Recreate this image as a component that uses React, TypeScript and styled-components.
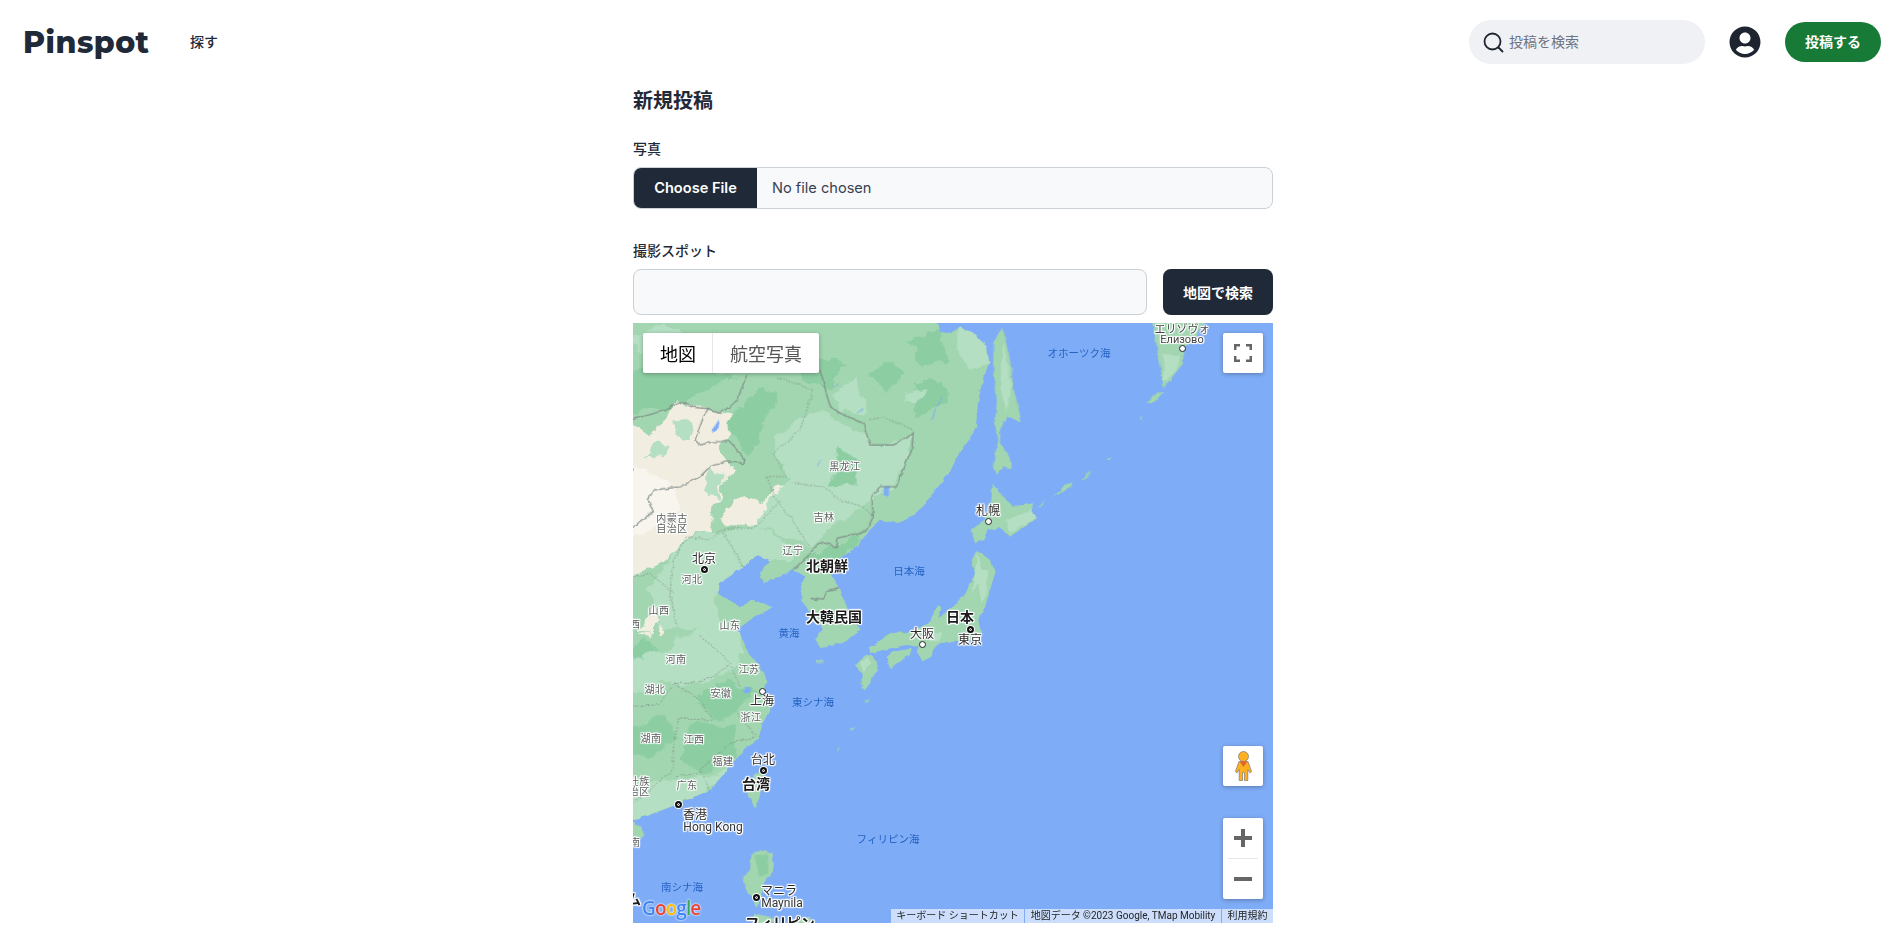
import styled, { createGlobalStyle } from "styled-components";
import { FaUserCircle } from "react-icons/fa";

const UI_FONT = `Inter, "Noto Sans CJK JP", sans-serif`;
const MAP_FONT = `Roboto, "Noto Sans CJK JP", sans-serif`;

const GlobalStyle = createGlobalStyle`
  * { box-sizing: border-box; }
  body {
    margin: 0;
    background: #fff;
    color: #1f2937;
    font-family: ${UI_FONT};
  }
`;

const Header = styled.header`
  height: 84px;
  padding: 0 22px 0 23px;
  display: flex;
  align-items: center;
`;

const Logo = styled.div`
  width: 167px;
  font-family: Montserrat, Inter, sans-serif;
  font-size: 30px;
  font-weight: 800;
  letter-spacing: 0.5px;
  color: #1f2937;
`;

const NavLink = styled.a`
  margin-bottom: 2px;
  font-size: 14px;
  font-weight: 500;
  color: #1f2937;
`;

const HeaderRight = styled.div`
  margin-left: auto;
  display: flex;
  align-items: center;
`;

const SearchBox = styled.div`
  width: 236px;
  height: 44px;
  padding-left: 14px;
  border-radius: 22px;
  background: #f0f1f5;
  display: flex;
  align-items: center;
  gap: 5px;
  font-size: 14px;
  color: #6b7280;
`;

const SearchText = styled.span`
  margin-bottom: 2px;
`;

const Avatar = styled.div`
  margin: 0 24px;
  display: flex;
  color: #1e2530;
`;

const PostButton = styled.button`
  width: 96px;
  height: 40px;
  padding: 0 0 2px;
  border: 0;
  border-radius: 20px;
  background: #177a37;
  color: #fff;
  font-family: inherit;
  font-size: 14px;
  font-weight: 700;
`;

const Main = styled.main`
  width: 640px;
  margin-left: 633px;
  padding: 3px 0 15px;
  display: flex;
  flex-direction: column;
`;

const Title = styled.h1`
  margin: 0 0 24px;
  font-size: 20px;
  line-height: 28px;
  font-weight: 700;
`;

const Label = styled.label`
  display: block;
  margin-bottom: 8px;
  font-size: 14px;
  line-height: 20px;
  font-weight: 500;
`;

const FileField = styled.div`
  height: 42px;
  margin-bottom: 32px;
  border: 1px solid #cbcfd6;
  border-radius: 8px;
  background: #f8f9fb;
  overflow: hidden;
  display: flex;
  align-items: center;
  font-size: 14.6px;
`;

const FileButton = styled.button`
  width: 123px;
  height: 100%;
  padding: 0;
  border: 0;
  background: #1f2937;
  color: #fff;
  font-family: inherit;
  font-size: 14.6px;
  font-weight: 600;
`;

const FileName = styled.span`
  margin-left: 15px;
  color: #374151;
`;

const SpotRow = styled.div`
  height: 46px;
  margin-bottom: 8px;
  display: flex;
  gap: 16px;
`;

const SpotInput = styled.input`
  flex: 1;
  min-width: 0;
  border: 1px solid #cbcfd6;
  border-radius: 8px;
  background: #f8f9fb;
`;

const MapSearchButton = styled.button`
  width: 110px;
  border: 0;
  border-radius: 8px;
  background: #1f2937;
  color: #fff;
  font-family: inherit;
  font-size: 14px;
  font-weight: 700;
`;

const MapFrame = styled.div`
  position: relative;
  height: 600px;
  overflow: hidden;
  background: #7facf6;
  font-family: ${MAP_FONT};
`;

const MapArt = styled.svg`
  display: block;
`;

const labelKinds = {
  province: `font-size: 10px; line-height: 10px; letter-spacing: .5px; color: #5a5f5c;`,
  city: `font-size: 12px; line-height: 12px; color: #2b2b2b;`,
  cityLatin: `font-size: 12px; line-height: 12px; color: #333;`,
  town: `font-size: 11px; line-height: 10px; color: #444;`,
  country: `font-size: 14px; line-height: 14px; font-weight: 700; color: #1b1b1b;`,
  sea: `font-size: 10.5px; line-height: 11px; color: #2563c4;`,
};

type LabelKind = keyof typeof labelKinds;

const MapLabel = styled.span<{ $x: number; $y: number; $kind: LabelKind }>`
  position: absolute;
  left: ${(p) => p.$x}px;
  top: ${(p) => p.$y}px;
  transform: translate(-50%, -50%);
  white-space: pre;
  text-align: center;
  ${(p) => labelKinds[p.$kind]}
  ${(p) =>
    p.$kind !== "sea" &&
    `text-shadow: 1px 0 1px #fff, -1px 0 1px #fff, 0 1px 1px #fff, 0 -1px 1px #fff, 1px 1px 1px #fff, -1px -1px 1px #fff, 1px -1px 1px #fff, -1px 1px 1px #fff;`}
`;

const CityDot = styled.span<{ $x: number; $y: number; $capital?: boolean }>`
  position: absolute;
  left: ${(p) => p.$x - 3.5}px;
  top: ${(p) => p.$y - 3.5}px;
  width: 7px;
  height: 7px;
  border-radius: 50%;
  background: ${(p) => (p.$capital ? "#111" : "#fff")};
  border: ${(p) => (p.$capital ? "2px solid #111" : "1.5px solid #222")};
  box-shadow: ${(p) => (p.$capital ? "inset 0 0 0 1px #fff, 0 0 0 1px #fff" : "none")};
`;

const MapTypeControl = styled.div`
  position: absolute;
  left: 10px;
  top: 10px;
  height: 40px;
  display: flex;
  border-radius: 2px;
  background: #fff;
  box-shadow: 0 1px 4px rgba(0, 0, 0, 0.3);
`;

const MapTypeTab = styled.div<{ $active?: boolean }>`
  padding: 0 17px;
  display: flex;
  align-items: center;
  font-size: 18px;
  color: ${(p) => (p.$active ? "#000" : "#565656")};
  & + & {
    box-shadow: -1px 0 0 #e6e6e6;
  }
`;

const ControlButton = styled.div<{ $top?: number; $bottom?: number }>`
  position: absolute;
  right: 10px;
  width: 40px;
  ${(p) => (p.$top !== undefined ? `top: ${p.$top}px; height: 40px;` : "")}
  ${(p) => (p.$bottom !== undefined ? `bottom: ${p.$bottom}px; height: 40px;` : "")}
  border-radius: 2px;
  background: #fff;
  box-shadow: 0 1px 4px rgba(0, 0, 0, 0.3);
  display: flex;
  align-items: center;
  justify-content: center;
`;

const ZoomControl = styled.div`
  position: absolute;
  right: 10px;
  bottom: 24px;
  width: 40px;
  height: 81px;
  border-radius: 2px;
  background: #fff;
  box-shadow: 0 1px 4px rgba(0, 0, 0, 0.3);
  display: flex;
  flex-direction: column;
  align-items: center;
  justify-content: space-between;
  padding: 11px 0;
`;

const ZoomDivider = styled.div`
  width: 30px;
  height: 1px;
  background: #e6e6e6;
`;

const GoogleMark = styled.div`
  position: absolute;
  left: 9px;
  bottom: 3px;
  font-family: "Open Sans", Roboto, sans-serif;
  font-size: 19px;
  line-height: 24px;
  font-weight: 600;
  letter-spacing: -0.9px;
  text-shadow: 0 0 2px #fff, 0 0 2px rgba(255, 255, 255, 0.7);
`;

const GoogleLetter = styled.span<{ $color: string }>`
  color: ${(p) => p.$color};
`;

const Attribution = styled.div`
  position: absolute;
  right: 0;
  bottom: 0;
  height: 14px;
  display: flex;
  gap: 1px;
  font-size: 10px;
  line-height: 14px;
  color: #1f1f1f;
`;

const AttributionItem = styled.span<{ $width: number }>`
  width: ${(p) => p.$width}px;
  background: rgba(255, 255, 255, 0.6);
  text-align: center;
  white-space: nowrap;
  overflow: hidden;
`;

const WATER = "#7facf6";
const LAND = "#a1d6b0";
const LIGHT = "#b4dfc2";
const DARK = "#8ccda2";
const CREAM = "#f2ede1";
const PALE = "#f8f5ee";
const LINE = "#7d8a85";

const MAINLAND =
  "M-10 -10L304 -10L304 0L307 9L318 11L325 4L340 10L354 24L356 40L349 60L345 80L343 104L334 120L324 134L317 149L297 174L284 190L264 200L247 197L234 210L224 224L204 237L197 250L207 267L214 284L227 307L210 320L187 324L182 317L189 307L184 297L170 280L167 264L172 254L160 247L130 260L127 250L137 237L124 232L110 244L87 260L85 270L107 284L120 277L140 284L117 297L104 307L107 310L114 327L127 344L134 360L130 370L140 380L130 400L125 417L110 427L100 440L77 467L47 480L17 492L-10 499Z";

// the shapes below are traced in 3x crop coordinates, hence the scaled groups
const NORTH_SHAPES: [string, string][] = [
  [CREAM, "0,310 60,340 140,250 200,262 330,300 270,380 310,450 260,540 240,640 160,650 130,700 60,750 0,770"],
  [PALE, "0,430 60,440 120,500 160,560 100,590 60,650 0,660"],
  [LIGHT, "130,300 180,310 190,360 140,350"],
  [LIGHT, "60,370 110,380 90,420 50,410"],
  [LIGHT, "225,450 285,480 260,530 210,510"],
  [CREAM, "280,570 340,530 400,550 420,500 470,490 430,540 420,610 330,620 280,610"],
  [LIGHT, "440,350 500,300 560,270 620,300 700,330 720,380 840,350 840,400 790,490 700,560 600,620 540,680 460,640 380,620 420,530 480,470 430,400"],
  [LIGHT, "160,660 240,640 380,620 460,650 500,720 400,720 320,760 260,800 250,860 300,930 100,930 60,800"],
  [LIGHT, "610,220 690,170 700,270 640,280"],
  [LIGHT, "0,60 70,20 160,40 120,100 30,110"],
  [DARK, "360,400 400,330 450,220 380,210 330,260 290,300 330,370"],
  [DARK, "0,170 130,120 250,160 320,170 240,200 130,260 0,290"],
  [DARK, "720,160 790,120 830,170 760,220"],
  [DARK, "830,60 940,40 950,130 880,130"],
  [DARK, "850,190 950,170 950,260 870,290"],
  [LIGHT, "820,220 880,200 850,250 820,250"],
  [DARK, "520,100 650,130 600,200 500,180"],
  [DARK, "620,390 700,420 680,490 600,500"],
  [DARK, "530,700 620,680 700,640 640,720 600,760 530,740"],
  [CREAM, "30,930 60,880 90,900 70,930"],
];

const SOUTH_SHAPES: [string, string][] = [
  [LIGHT, "0,130 100,90 200,30 320,20 350,90 310,140 270,170 180,190 90,190 0,220"],
  [LIGHT, "0,500 80,480 200,480 310,430 240,510 150,550 0,600"],
  [DARK, "200,230 300,180 380,220 330,280 250,300"],
  [DARK, "0,320 110,290 140,350 60,420 0,400"],
  [DARK, "180,310 320,320 310,400 220,460 150,420"],
  [DARK, "40,60 90,90 40,130 0,110"],
  [CREAM, "30,35 60,30 55,48 35,45"],
  [CREAM, "90,25 115,20 110,38 92,38"],
];

const BORDERS = [
  "0,300 110,270 150,245 190,262 230,265 270,280 320,245 350,165",
  "230,265 195,360 210,375 250,365 300,365 345,420 340,430 290,425 240,440 210,470 150,500 70,510 55,540 70,575 0,625",
  "570,150 600,260 640,285 700,310 720,375 790,375 850,340 845,390 820,450 800,500 750,500 725,530 730,590 710,630",
  "490,750 540,700 570,665 620,680 620,655 680,640 710,630",
  "540,835 580,840 590,815 630,805",
];

const PROVINCE_LINES = [
  "440,170 550,210 510,330 430,400 470,470 410,470 440,540 480,590 540,680",
  "490,490 580,500 630,540 700,560 730,590",
  "720,300 760,290 850,330",
  "450,540 380,620 270,630 240,660 170,650 130,720 120,820 140,920",
  "280,640 330,720 340,760",
  "0,770 60,760 130,820",
];

const RIVERS = ["905,300 920,260 935,235", "615,205 625,190", "680,280 700,265", "560,440 575,420"];

const SOUTH_LINES = [
  "210,50 250,80 300,130 250,170 190,190 130,190 90,250 0,260",
  "130,190 200,230 250,300 210,300 150,290 130,370 130,450 0,560",
  "320,280 380,350 300,370 210,450 240,510",
  "140,470 210,460",
  "300,130 330,200",
];

const LABELS: { text: string; x: number; y: number; kind: LabelKind }[] = [
  { text: "黒龙江", x: 212, y: 144, kind: "province" },
  { text: "吉林", x: 191, y: 195, kind: "province" },
  { text: "内蒙古\n自治区", x: 39, y: 201, kind: "province" },
  { text: "辽宁", x: 160, y: 228, kind: "province" },
  { text: "北京", x: 71, y: 236, kind: "city" },
  { text: "河北", x: 59, y: 257, kind: "province" },
  { text: "北朝鮮", x: 194, y: 243, kind: "country" },
  { text: "日本海", x: 276, y: 248, kind: "sea" },
  { text: "山西", x: 26, y: 288, kind: "province" },
  { text: "陕西", x: -3, y: 302, kind: "province" },
  { text: "山东", x: 97, y: 303, kind: "province" },
  { text: "大韓民国", x: 201, y: 294, kind: "country" },
  { text: "オホーツク海", x: 446, y: 30, kind: "sea" },
  { text: "エリゾヴォ", x: 549, y: 7, kind: "town" },
  { text: "Елизово", x: 549, y: 17, kind: "town" },
  { text: "札幌", x: 355, y: 188, kind: "city" },
  { text: "日本", x: 327, y: 294, kind: "country" },
  { text: "東京", x: 337, y: 317, kind: "city" },
  { text: "大阪", x: 289, y: 311, kind: "city" },
  { text: "黄海", x: 156, y: 310, kind: "sea" },
  { text: "河南", x: 43, y: 337, kind: "province" },
  { text: "江苏", x: 116, y: 347, kind: "province" },
  { text: "湖北", x: 22, y: 367, kind: "province" },
  { text: "安徽", x: 88, y: 371, kind: "province" },
  { text: "上海", x: 129, y: 378, kind: "city" },
  { text: "東シナ海", x: 180, y: 379, kind: "sea" },
  { text: "浙江", x: 118, y: 395, kind: "province" },
  { text: "湖南", x: 18, y: 416, kind: "province" },
  { text: "江西", x: 61, y: 417, kind: "province" },
  { text: "福建", x: 90, y: 439, kind: "province" },
  { text: "台北", x: 130, y: 437, kind: "city" },
  { text: "台湾", x: 123, y: 461, kind: "country" },
  { text: "广东", x: 54, y: 463, kind: "province" },
  { text: "西壮族\n自治区", x: 1, y: 464, kind: "province" },
  { text: "香港", x: 62, y: 492, kind: "city" },
  { text: "Hong Kong", x: 80, y: 504, kind: "cityLatin" },
  { text: "海南", x: -3, y: 520, kind: "province" },
  { text: "フィリピン海", x: 255, y: 516, kind: "sea" },
  { text: "南シナ海", x: 49, y: 564, kind: "sea" },
  { text: "ム", x: 1, y: 576, kind: "country" },
  { text: "マニラ", x: 146, y: 568, kind: "city" },
  { text: "Maynila", x: 149, y: 580, kind: "cityLatin" },
  { text: "フィリピン", x: 147, y: 600, kind: "country" },
];

const DOTS: { x: number; y: number; capital?: boolean }[] = [
  { x: 71, y: 246, capital: true },
  { x: 549, y: 25 },
  { x: 355, y: 198 },
  { x: 337, y: 306, capital: true },
  { x: 289, y: 321 },
  { x: 129, y: 368 },
  { x: 130, y: 447, capital: true },
  { x: 45, y: 481, capital: true },
  { x: 123, y: 574, capital: true },
];

function MapDrawing() {
  return (
    <MapArt width="640" height="600" viewBox="0 0 640 600">
      <defs>
        <clipPath id="mainland-clip">
          <path d={MAINLAND} />
        </clipPath>
        <filter id="terrain" filterUnits="userSpaceOnUse" x="-20" y="-20" width="680" height="640">
          <feTurbulence type="fractalNoise" baseFrequency="0.05" numOctaves="3" seed="4" />
          <feDisplacementMap in="SourceGraphic" scale="16" xChannelSelector="R" yChannelSelector="G" />
        </filter>
        <filter id="coast" filterUnits="userSpaceOnUse" x="-20" y="-20" width="680" height="640">
          <feTurbulence type="fractalNoise" baseFrequency="0.14" numOctaves="2" seed="9" />
          <feDisplacementMap in="SourceGraphic" scale="4" xChannelSelector="R" yChannelSelector="G" />
        </filter>
      </defs>
      <g filter="url(#coast)">
        <path d={MAINLAND} fill={LAND} />
        <g clipPath="url(#mainland-clip)">
          <g filter="url(#terrain)">
            <g transform="translate(-3 -3) scale(.3333)">
              {NORTH_SHAPES.map(([fill, points]) => (
                <polygon key={points} points={points} fill={fill} />
              ))}
            </g>
            <g transform="translate(-3 297) scale(.3333)">
              {SOUTH_SHAPES.map(([fill, points]) => (
                <polygon key={points} points={points} fill={fill} />
              ))}
            </g>
          </g>
          <g transform="translate(-3 -3) scale(.3333)">
            <polygon points="245,330 270,295 265,325 250,335" fill={WATER} />
            <polygon points="762,500 780,497 775,530 760,525" fill={WATER} />
            {RIVERS.map((points) => (
              <polyline key={points} points={points} fill="none" stroke={WATER} strokeWidth="3" />
            ))}
            {BORDERS.map((points) => (
              <polyline key={points} points={points} fill="none" stroke={LINE} strokeWidth="3.5" />
            ))}
            {PROVINCE_LINES.map((points) => (
              <polyline key={points} points={points} fill="none" stroke={LINE} strokeWidth="2.5" strokeDasharray="5 5" />
            ))}
          </g>
          <g transform="translate(-3 297) scale(.3333)">
            <circle cx="352" cy="210" r="10" fill={WATER} />
            {SOUTH_LINES.map((points) => (
              <polyline key={points} points={points} fill="none" stroke={LINE} strokeWidth="2.5" strokeDasharray="5 5" />
            ))}
          </g>
        </g>
        {/* Sakhalin, Hokkaido, Kamchatka, Kurils */}
        <g transform="translate(317 -3) scale(.3333)" fill={LAND}>
          <polygon points="155,20 165,50 180,120 190,200 215,305 170,290 150,330 150,370 185,425 185,445 160,440 140,465 130,430 145,360 135,320 140,240 130,140 130,70" />
          <polygon points="125,490 190,560 250,550 240,590 265,592 180,650 150,625 110,630 100,660 75,670 65,630 110,590 125,530" />
          <polygon points="605,0 770,0 735,50 700,90 700,130 640,205 630,130" />
          <polygon points="590,250 610,225 640,215 615,245" />
          <polygon points="570,297 573,282 576,295" />
          <polygon points="470,422 485,410 478,424" />
          <polygon points="392,482 425,450 410,475" />
          <polygon points="305,532 340,500 370,487 350,510" />
          <polygon points="255,567 285,535 275,555" />
          <polygon points="25,20 70,40 110,80 118,130 60,150 20,90" fill={LIGHT} />
          <polygon points="160,60 170,120 185,200 170,280 150,200" fill={LIGHT} />
          <polygon points="640,100 690,110 680,150 640,190" fill={LIGHT} />
          <polygon points="170,600 240,570 262,592 180,640" fill={LIGHT} />
        </g>
        {/* Japan */}
        <g transform="translate(217 217) scale(.3333)" fill={LAND}>
          <polygon points="380,30 420,60 435,100 420,150 405,200 385,240 395,290 350,300 320,300 270,310 250,325 245,350 220,362 200,340 205,320 170,315 120,325 60,340 60,325 120,280 180,275 235,250 265,195 275,200 265,235 310,200 345,160 375,100 365,60" />
          <polygon points="110,350 130,335 185,325 180,345 140,370 120,388" />
          <polygon points="20,370 50,345 70,350 85,385 60,430 45,450 35,445 35,400 15,375" />
          <polygon points="380,40 395,90 415,90 410,160 395,190 385,130 365,160 375,100" fill={LIGHT} />
          <polygon points="230,280 280,280 270,300 240,305" fill={LIGHT} />
          <polygon points="30,370 55,350 60,370 40,395" fill={LIGHT} />
        </g>
        {/* Jeju, Ryukyu, Taiwan, Hainan, Philippines */}
        <g transform="translate(-3 297) scale(.3333)" fill={LAND}>
          <polygon points="558,125 578,118 582,126 565,132" />
          <polygon points="660,327 676,321 668,332" />
          <polygon points="618,392 630,385 626,392" />
          <polygon points="702,245 720,235 714,247" />
          <polygon points="400,445 405,470 385,540 375,565 355,530 350,510 370,470" />
          <polygon points="0,600 35,620 38,650 0,665" />
          <polygon points="365,700 395,690 425,700 430,750 405,780 395,820 380,860 345,800 340,770 360,750" />
          <polygon points="372,880 410,888 440,905 372,915" />
          <polygon points="500,900 540,890 555,915 500,915" />
          <polygon points="372,705 415,705 415,760 390,770" fill={DARK} />
        </g>
      </g>
    </MapArt>
  );
}

function FullscreenIcon() {
  return (
    <svg width="18" height="18" viewBox="0 0 18 18" fill="none" stroke="#666" strokeWidth="2.5">
      <path d="M1.200 6V1.200H6M12 1.200h4.800V6M16.800 12v4.800H12M6 16.800H1.200V12" />
    </svg>
  );
}

function Pegman() {
  return (
    <svg width="17" height="30" viewBox="0 0 17 30">
      <circle cx="8.500" cy="5.500" r="5" fill="#ffb020" stroke="#7a7a7a" strokeWidth="0.7" />
      <path
        d="M4 10.500h9l3.600 10-1.500 1.500-2.300-3.500V29.500H9.500v-8h-2v8H4.200V18.500L1.900 22 .4 20.500z"
        fill="#ffb020"
        stroke="#7a7a7a"
        strokeWidth="0.7"
      />
      <path d="M4.500 10.500h8l-4 5.500z" fill="#e4652b" />
    </svg>
  );
}

function PlusIcon() {
  return (
    <svg width="18" height="18" viewBox="0 0 18 18" fill="#666">
      <path d="M7 0h4v7h7v4h-7v7H7v-7H0V7h7z" />
    </svg>
  );
}

function MinusIcon() {
  return (
    <svg width="18" height="18" viewBox="0 0 18 18" fill="#666">
      <path d="M0 7h18v4H0z" />
    </svg>
  );
}

function SearchIcon() {
  return (
    <svg width="21" height="21" viewBox="0 0 21 21" fill="none" stroke="#1e2530" strokeWidth="1.800" strokeLinecap="round">
      <circle cx="9.500" cy="9.500" r="8" />
      <path d="M15.500 15.500l4 4" />
    </svg>
  );
}

function MapView() {
  return (
    <MapFrame>
      <MapDrawing />
      {LABELS.map((label) => (
        <MapLabel key={label.text} $x={label.x} $y={label.y} $kind={label.kind}>
          {label.text}
        </MapLabel>
      ))}
      {DOTS.map((dot) => (
        <CityDot key={`${dot.x}-${dot.y}`} $x={dot.x} $y={dot.y} $capital={dot.capital} />
      ))}
      <MapTypeControl>
        <MapTypeTab $active>地図</MapTypeTab>
        <MapTypeTab>航空写真</MapTypeTab>
      </MapTypeControl>
      <ControlButton $top={10}>
        <FullscreenIcon />
      </ControlButton>
      <ControlButton $bottom={137}>
        <Pegman />
      </ControlButton>
      <ZoomControl>
        <PlusIcon />
        <ZoomDivider />
        <MinusIcon />
      </ZoomControl>
      <GoogleMark>
        <GoogleLetter $color="#4285f4">G</GoogleLetter>
        <GoogleLetter $color="#ea4335">o</GoogleLetter>
        <GoogleLetter $color="#fbbc05">o</GoogleLetter>
        <GoogleLetter $color="#4285f4">g</GoogleLetter>
        <GoogleLetter $color="#34a853">l</GoogleLetter>
        <GoogleLetter $color="#ea4335">e</GoogleLetter>
      </GoogleMark>
      <Attribution>
        <AttributionItem $width={133}>キーボード ショートカット</AttributionItem>
        <AttributionItem $width={196}>地図データ ©2023 Google, TMap Mobility</AttributionItem>
        <AttributionItem $width={51}>利用規約</AttributionItem>
      </Attribution>
    </MapFrame>
  );
}

export default function App() {
  return (
    <>
      <GlobalStyle />
      <Header>
        <Logo>Pinspot</Logo>
        <NavLink>探す</NavLink>
        <HeaderRight>
          <SearchBox>
            <SearchIcon />
            <SearchText>投稿を検索</SearchText>
          </SearchBox>
          <Avatar>
            <FaUserCircle size={32} />
          </Avatar>
          <PostButton>投稿する</PostButton>
        </HeaderRight>
      </Header>
      <Main>
        <Title>新規投稿</Title>
        <Label>写真</Label>
        <FileField>
          <FileButton>Choose File</FileButton>
          <FileName>No file chosen</FileName>
        </FileField>
        <Label>撮影スポット</Label>
        <SpotRow>
          <SpotInput />
          <MapSearchButton>地図で検索</MapSearchButton>
        </SpotRow>
        <MapView />
      </Main>
    </>
  );
}
